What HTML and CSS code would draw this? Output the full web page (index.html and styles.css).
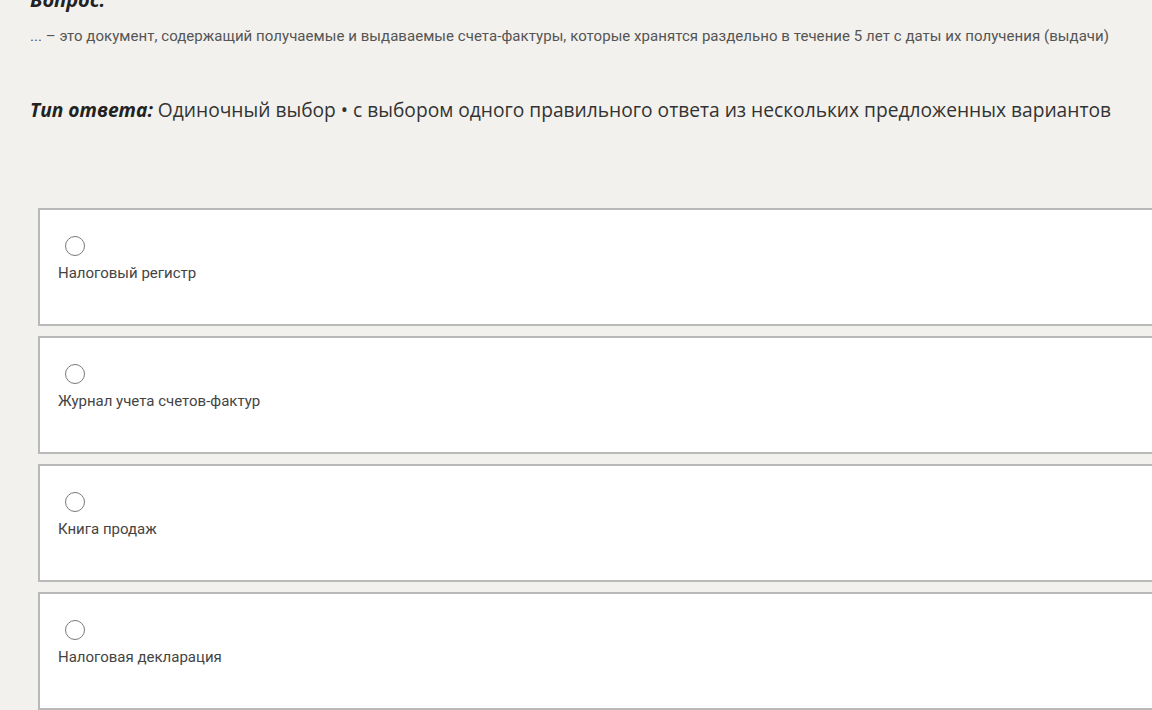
FILE: index.html
```html
<!DOCTYPE html>
<html lang="ru">
<head>
    <meta charset="utf-8">
    <title>Вопрос</title>
    <link rel="stylesheet" href="styles.css">
</head>
<body>
    <div id="question">
        <h3 class="q-title">Вопрос:</h3>
        <p class="q-text">... – это документ, содержащий получаемые и выдаваемые счета-фактуры, которые хранятся раздельно в течение 5 лет с даты их получения (выдачи)</p>
        <p class="q-type"><b>Тип ответа:</b> Одиночный выбор • с выбором одного правильного ответа из нескольких предложенных вариантов</p>
        <div id="answers">
            <label class="answer">
                <span class="radio"></span>
                <span class="answer-text">Налоговый регистр</span>
            </label>
            <label class="answer">
                <span class="radio"></span>
                <span class="answer-text">Журнал учета счетов-фактур</span>
            </label>
            <label class="answer">
                <span class="radio"></span>
                <span class="answer-text">Книга продаж</span>
            </label>
            <label class="answer">
                <span class="radio"></span>
                <span class="answer-text">Налоговая декларация</span>
            </label>
        </div>
    </div>
</body>
</html>
```

FILE: styles.css
```css
html, body {
    margin: 0;
    padding: 0;
    background: #f2f1ed;
    overflow: hidden;
}

#question {
    padding: 0 0 0 30px;
    font-family: Roboto, "Liberation Sans", sans-serif;
}

.q-title {
    margin: -12px 0 0;
    font-family: "Open Sans", sans-serif;
    font-size: 20px;
    font-style: italic;
    font-weight: 700;
    line-height: 24px;
    color: #222;
}

.q-text {
    margin: 14px 0 0;
    font-size: 15px;
    line-height: 20px;
    letter-spacing: 0.05px;
    color: #555;
    white-space: nowrap;
}

.q-type {
    margin: 51px 0 0;
    font-family: "Open Sans", sans-serif;
    font-size: 19.2px;
    line-height: 26px;
    color: #333;
    white-space: nowrap;
}

.q-type b {
    font-style: italic;
    color: #222;
}

#answers {
    margin: 85px 0 0 8px;
    display: flex;
    flex-direction: column;
    gap: 10px;
    width: 1140px;
}

.answer {
    display: flex;
    flex-direction: column;
    align-items: flex-start;
    height: 114px;
    box-sizing: content-box;
    padding: 0 18px;
    background: #fff;
    border: 2px solid #b9b9b7;
    cursor: pointer;
}

.radio {
    display: block;
    width: 18px;
    height: 18px;
    margin: 26px 0 0 7px;
    border: 1.5px solid #7a7a7a;
    border-radius: 50%;
}

.answer-text {
    margin-top: 7px;
    font-size: 15px;
    line-height: 20px;
    color: #444;
}
```
